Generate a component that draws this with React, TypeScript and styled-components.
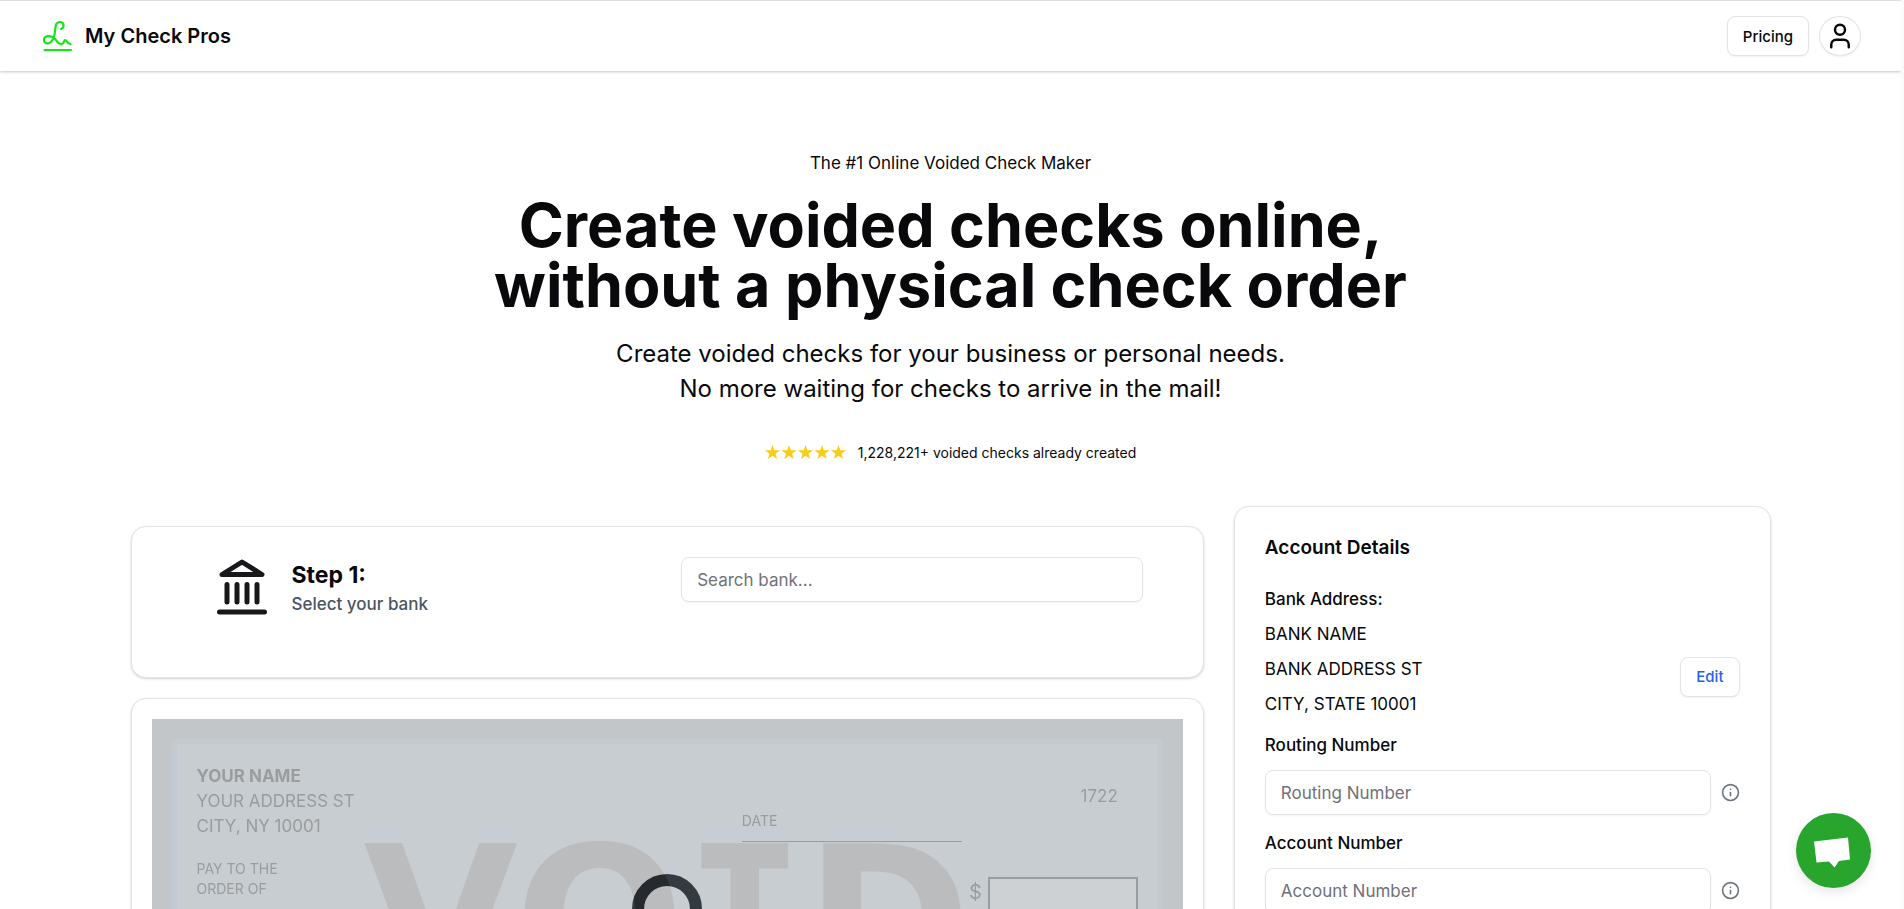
import React from 'react';
import styled, { createGlobalStyle } from 'styled-components';
import { User, Info } from 'lucide-react';

const GlobalStyle = createGlobalStyle`
  * { box-sizing: border-box; }
  html { background: #fafafa; }
  body {
    margin: 0 3px 0 0;
    background: #fff;
    color: #09090b;
    font-family: Inter, "Liberation Sans", sans-serif;
    font-size: 17px;
  }
  #root { background: #fff; }
  h1, h2, h3, p { margin: 0; }
  button, input { font-family: inherit; color: inherit; }
`;

const Page = styled.div`
  height: 100vh;
  overflow: hidden;
  border-top: 1px solid #dedede;
`;

const Header = styled.header`
  display: flex;
  align-items: center;
  justify-content: space-between;
  height: 70px;
  padding: 0 40px;
  box-shadow: 0 1px 3px rgba(0, 0, 0, 0.14), 0 1px 2px rgba(0, 0, 0, 0.1);
`;

const Brand = styled.a`
  display: flex;
  align-items: center;
  gap: 10px;
  color: inherit;
  text-decoration: none;
  font-size: 20px;
  font-weight: 600;
`;

const Nav = styled.nav`
  display: flex;
  gap: 10px;
`;

const Button = styled.button<{ $link?: boolean }>`
  height: 40px;
  padding: 0 15px;
  border: 1px solid #e4e4e7;
  border-radius: 8px;
  background: #fff;
  box-shadow: 0 1px 2px rgba(0, 0, 0, 0.06);
  font-size: 15px;
  font-weight: 500;
  color: ${(p) => (p.$link ? '#2563eb' : '#09090b')};
`;

const Avatar = styled(Button)`
  display: flex;
  align-items: center;
  justify-content: center;
  width: 42px;
  padding: 0;
  border-radius: 50%;
`;

const Hero = styled.section`
  display: flex;
  flex-direction: column;
  align-items: center;
  padding-top: 80px;
  text-align: center;
`;

const Eyebrow = styled.p`
  line-height: 24px;
`;

const Title = styled.h1`
  margin-top: 20px;
  font-size: 61px;
  line-height: 60px;
  font-weight: 700;
`;

const Subtitle = styled.p`
  margin-top: 21px;
  font-size: 24px;
  line-height: 35px;
`;

const Rating = styled.div`
  display: flex;
  align-items: center;
  gap: 11px;
  margin-top: 35px;
  font-size: 14px;
  line-height: 24px;
`;

const Stars = styled.svg`
  display: block;
  fill: #facc15;
`;

const Columns = styled.main`
  display: grid;
  grid-template-columns: 2fr 1fr;
  align-items: start;
  gap: 30px;
  max-width: 1640px;
  margin: 41px auto 0;
`;

const Stack = styled.div`
  display: flex;
  flex-direction: column;
  gap: 20px;
  padding-top: 20px;
`;

const Card = styled.section`
  border: 1px solid #e4e4e7;
  border-radius: 15px;
  background: #fff;
  box-shadow: 0 1px 3px rgba(0, 0, 0, 0.1), 0 1px 2px rgba(0, 0, 0, 0.08);
`;

const StepCard = styled(Card)`
  display: grid;
  grid-template-columns: 1fr 1fr;
  gap: 8px;
  padding: 30px 60px 60px 80px;
`;

const Step = styled.div`
  display: flex;
  align-items: center;
  gap: 20px;
`;

const StepTitle = styled.h2`
  padding-top: 2px;
  font-size: 23px;
  line-height: 32px;
  font-weight: 700;
`;

const StepText = styled.p`
  line-height: 26px;
  font-weight: 500;
  color: #4b5563;
`;

const TextInput = styled.input`
  width: 100%;
  min-width: 0;
  height: 45px;
  padding: 0 15px;
  border: 1px solid #e4e4e7;
  border-radius: 8px;
  background: #fff;
  box-shadow: 0 1px 2px rgba(0, 0, 0, 0.05);
  font-size: 17px;
  &::placeholder { color: #71717a; opacity: 1; }
`;

const DetailsCard = styled(Card)`
  padding: 30px 30px 60px;
`;

const DetailsTitle = styled.h2`
  font-size: 19px;
  line-height: 22px;
  font-weight: 600;
  margin-bottom: 23px;
`;

const AddressRow = styled.div`
  display: flex;
  align-items: center;
  justify-content: space-between;
  margin-bottom: 6px;
`;

const Address = styled.div`
  line-height: 35px;
`;

const AddressTitle = styled.h3`
  font-size: 17px;
  line-height: 35px;
  font-weight: 500;
`;

const AddressAction = styled.div`
  padding-top: 14px;
`;

const FieldLabel = styled.label`
  display: block;
  line-height: 35px;
  margin-bottom: 7px;
  font-weight: 500;
`;

const FieldRow = styled.div`
  display: flex;
  align-items: center;
  gap: 10px;
  margin-bottom: 11px;
  color: #6b7280;
  svg { flex: none; }
`;

const CheckCard = styled(Card)`
  padding: 20px;
`;

const Check = styled.div`
  position: relative;
  isolation: isolate;
  padding: 20px;
  background: #c2c6c9;
  color: #9a9c9d;
`;

const CheckPaper = styled.div`
  height: 420px;
  padding: 20px;
  border: 5px solid #c2c9cf;
  background: #c8cdd1;
`;

const CheckTop = styled.div`
  display: flex;
  align-items: flex-start;
  line-height: 25px;
`;

const Payer = styled.div`
  flex: 1;
`;

const Name = styled.p`
  font-weight: 700;
`;

const DateLine = styled.div`
  width: 220px;
  height: 78px;
  padding-top: 47px;
  border-bottom: 1px solid #999d9f;
  font-size: 14px;
  line-height: 20px;
`;

const CheckNumber = styled.p`
  width: 176px;
  padding: 20px 20px 0 0;
  text-align: right;
`;

const PayRow = styled.div`
  display: flex;
  align-items: flex-start;
  justify-content: space-between;
  margin-top: 17px;
  font-size: 14px;
  line-height: 20px;
`;

const Amount = styled.div`
  display: flex;
  gap: 6px;
  padding-top: 18px;
  font-size: 20px;
  line-height: 30px;
`;

const AmountBox = styled.div`
  width: 150px;
  height: 50px;
  border: 2px solid #999d9f;
  background: #cdd1d3;
`;

/* The stamp darkens the paper and the spinner beneath it by the same amount. */
const VoidStamp = styled.div`
  position: absolute;
  inset: 84px 0 auto;
  text-align: center;
  font-family: "DejaVu Sans", sans-serif;
  font-size: 200px;
  line-height: 234px;
  font-weight: 700;
  color: #0d1113;
  mix-blend-mode: difference;
`;

const SlabLetter = styled.span`
  font-family: "DejaVu Sans Mono", monospace;
`;

const Spinner = styled.div`
  position: absolute;
  top: 155px;
  left: calc(50% - 35px);
  width: 70px;
  height: 70px;
  border: 12px solid #333a40;
  border-radius: 50%;
`;

const ChatButton = styled.button`
  position: fixed;
  right: 33px;
  bottom: 21px;
  width: 75px;
  height: 75px;
  padding: 0;
  border: 0;
  border-radius: 50%;
  background: #28a52c;
  box-shadow: 0 4px 12px rgba(0, 0, 0, 0.1);
  svg { display: block; }
`;

const star = 'M7.5 0 9.300 5.300H15L10.500 8.700 12.200 14 7.500 10.800 2.800 14 4.500 8.700 0 5.300H5.700Z';

function NumberField({ id, label }: { id: string; label: string }) {
  return (
    <div>
      <FieldLabel htmlFor={id}>{label}</FieldLabel>
      <FieldRow>
        <TextInput id={id} placeholder={label} />
        <Info size={19} />
      </FieldRow>
    </div>
  );
}

export default function App() {
  return (
    <Page>
      <GlobalStyle />
      <Header>
        <Brand href="#">
          <svg width="35" height="32" viewBox="0 0 35 32" fill="none" stroke="#14e814" strokeWidth="2.2" strokeLinecap="round" strokeLinejoin="round">
            <path d="M21 9C24.500 8 24.500 2 20 2C13 2 17 12 13 19C10.500 24.500 4 25 4 20C4 15 11 15.500 14 18C17 20 17 24 21 24C25 24 23.500 20 25 20C27 20 26.500 23 30.500 24" />
            <path d="M4.500 30H31" />
          </svg>
          My Check Pros
        </Brand>
        <Nav>
          <Button>Pricing</Button>
          <Avatar aria-label="Account"><User size={30} /></Avatar>
        </Nav>
      </Header>
      <Hero>
        <Eyebrow>The #1 Online Voided Check Maker</Eyebrow>
        <Title>Create voided checks online,<br />without a physical check order</Title>
        <Subtitle>Create voided checks for your business or personal needs.<br />No more waiting for checks to arrive in the mail!</Subtitle>
        <Rating>
          <Stars width="82" height="17" viewBox="0 0 82 17" aria-label="5 stars">
            {[0, 1, 2, 3, 4].map((i) => <path key={i} d={star} transform={`translate(${i * 16.5})`} />)}
          </Stars>
          <p>1,228,221+ voided checks already created</p>
        </Rating>
      </Hero>
      <Columns>
        <Stack>
          <StepCard>
            <Step>
              <svg width="60" height="60" viewBox="0 0 24 24" fill="none" stroke="#18181b" strokeWidth="2" strokeLinecap="round" strokeLinejoin="round">
                <path d="M3 22H21M6 18V11M10 18V11M14 18V11M18 18V11M12 2L20 7H4Z" />
              </svg>
              <div>
                <StepTitle>Step 1:</StepTitle>
                <StepText>Select your bank</StepText>
              </div>
            </Step>
            <TextInput aria-label="Search bank" placeholder="Search bank..." />
          </StepCard>
          <CheckCard>
            <Check>
              <CheckPaper>
                <CheckTop>
                  <Payer>
                    <Name>YOUR NAME</Name>
                    <p>YOUR ADDRESS ST</p>
                    <p>CITY, NY 10001</p>
                  </Payer>
                  <DateLine>DATE</DateLine>
                  <CheckNumber>1722</CheckNumber>
                </CheckTop>
                <PayRow>
                  <p>PAY TO THE<br />ORDER OF</p>
                  <Amount>$<AmountBox /></Amount>
                </PayRow>
              </CheckPaper>
              <Spinner role="status" aria-label="Loading" />
              <VoidStamp>VO<SlabLetter>I</SlabLetter>D</VoidStamp>
            </Check>
          </CheckCard>
        </Stack>
        <DetailsCard>
          <DetailsTitle>Account Details</DetailsTitle>
          <AddressTitle>Bank Address:</AddressTitle>
          <AddressRow>
            <Address>
              <p>BANK NAME</p>
              <p>BANK ADDRESS ST</p>
              <p>CITY, STATE 10001</p>
            </Address>
            <AddressAction>
              <Button $link>Edit</Button>
            </AddressAction>
          </AddressRow>
          <NumberField id="routing" label="Routing Number" />
          <NumberField id="account" label="Account Number" />
        </DetailsCard>
      </Columns>
      <ChatButton aria-label="Open chat">
        <svg width="75" height="75" viewBox="0 0 75 75" fill="#fff">
          <path d="M18 28.500L52 24.500L54 46.500L43 48L38.500 54.500L33 48.500L20.500 49.500Z" />
        </svg>
      </ChatButton>
    </Page>
  );
}
